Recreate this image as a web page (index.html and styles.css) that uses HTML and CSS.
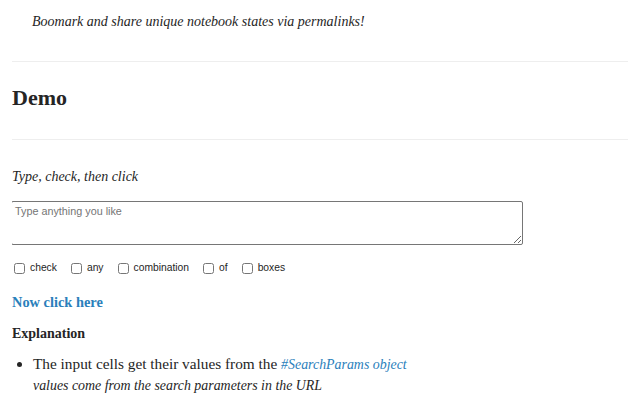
FILE: index.html
```html
<!DOCTYPE html>
<html>
	<head>
		<title>Permalinks</title>
		<link rel="stylesheet" href="styles.css">
	</head>
	<body>
		<p class="tagline">Boomark and share unique notebook states via permalinks!</p>
		<hr>
		<h2>Demo</h2>
		<hr>
		<p class="prompt">Type, check, then click</p>
		<textarea placeholder="Type anything you like"></textarea>
		<div class="boxes">
			<label><input type="checkbox"> check</label>
			<label><input type="checkbox"> any</label>
			<label><input type="checkbox"> combination</label>
			<label><input type="checkbox"> of</label>
			<label><input type="checkbox"> boxes</label>
		</div>
		<p class="action"><a href="#">Now click here</a></p>
		<h4>Explanation</h4>
		<ul>
			<li>The input cells get their values from the <a href="#"><em>#SearchParams object</em></a><br>
				<em>values come from the search parameters in the URL</em></li>
		</ul>
	</body>
</html>
```
FILE: styles.css
```css
body {
	font-family: "Liberation Serif", serif;
	font-size: 15.3px;
	line-height: 20px;
	color: #252525;
	margin: 0 12px;
}
em { font-size: 13.9px; }
.tagline, .prompt { font-size: 14px; }
a { color: #2a80bb; text-decoration: none; }
hr {
	border: 0;
	border-top: 1px solid #eee;
	margin: 0;
}
.tagline {
	font-style: italic;
	margin: 12px 0 29px 20px;
}
h2 {
	font-size: 22px;
	line-height: 28px;
	margin: 22px 0 27px;
}
.prompt { font-style: italic; margin: 27px 0 14px; }
textarea {
	display: block;
	width: 512px;
	height: 44px;
	box-sizing: border-box;
	margin: 0 0 0 -1px;
	border: 1px solid #767676;
	border-radius: 2px;
	font-family: "Liberation Sans", sans-serif;
	font-size: 10.8px;
	line-height: 13px;
	padding: 3px 3px;
}
.boxes {
	display: flex;
	gap: 14px;
	height: 14px;
	margin: 16px 0 0 2px;
	font-family: "Liberation Sans", sans-serif;
	font-size: 10.3px;
}
.boxes label { display: flex; align-items: center; gap: 5px; }
.boxes input { margin: 0; width: 11px; height: 11px; }
.action { font-size: 14.4px; font-weight: bold; margin: 17px 0 0; }
h4 { font-size: 14px; line-height: 20px; margin: 12px 0 0; }
ul { margin: 10px 0 0; padding-left: 21px; }
```
